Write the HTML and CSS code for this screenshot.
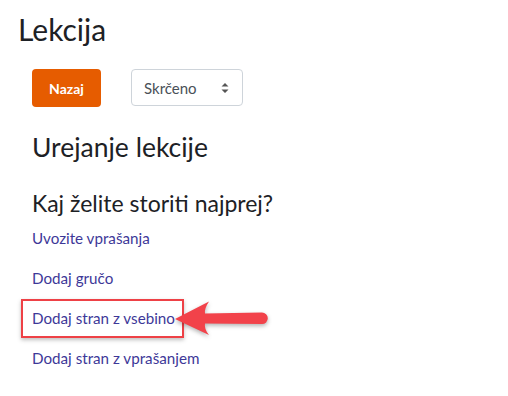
FILE: index.html
```html
<!DOCTYPE html>
<html lang="sl">
<head>
<meta charset="utf-8">
<title>Lekcija</title>
<link rel="stylesheet" href="styles.css">
</head>
<body>
<div class="page">
  <h1 class="title">Lekcija</h1>
  <div class="content">
    <div class="toolbar">
      <button class="btn-back" type="button">Nazaj</button>
      <div class="select">
        <span class="select-label">Skrčeno</span>
        <svg class="select-arrows" width="8" height="10" viewBox="0 0 8 10"><path d="M4 0 L7.5 3.6 H0.5 Z M4 10 L7.5 6.4 H0.5 Z" fill="#555"/></svg>
      </div>
    </div>
    <h2 class="subtitle">Urejanje lekcije</h2>
    <h3 class="question">Kaj želite storiti najprej?</h3>
    <ul class="actions">
      <li><a href="#">Uvozite vprašanja</a></li>
      <li><a href="#">Dodaj gručo</a></li>
      <li class="highlighted">
        <a href="#">Dodaj stran z vsebino</a>
        <span class="mark-box"></span>
        <svg class="mark-arrow" width="110" height="50" viewBox="0 0 110 50">
          <path d="M6 25 L40 7.5 Q35 15 36 19.5 L93 18.5 A5.8 5.8 0 0 1 93 30.1 L36 29.5 Q35 35 40 41 Z" fill="#f2424a"/>
        </svg>
      </li>
      <li><a href="#">Dodaj stran z vprašanjem</a></li>
    </ul>
  </div>
</div>
</body>
</html>
```

FILE: styles.css
```css
html, body {
  margin: 0;
  padding: 0;
  background: #ffffff;
}

body {
  font-family: "Lato", "Liberation Sans", sans-serif;
  color: #1d2125;
}

.page {
  padding: 11px 0 0 18px;
}

.title {
  margin: 0;
  font-size: 30px;
  line-height: 36px;
  font-weight: 400;
}

.content {
  padding-left: 14px;
}

.toolbar {
  display: flex;
  gap: 30px;
  margin-top: 22px;
  height: 38px;
}

.btn-back {
  width: 69px;
  height: 38px;
  border: none;
  border-radius: 4px;
  background: #e65c00;
  color: #ffffff;
  font-family: inherit;
  font-size: 14px;
  font-weight: 700;
  padding: 0;
}

.select {
  box-sizing: border-box;
  width: 112px;
  height: 37px;
  border: 1px solid #ced4da;
  border-radius: 4px;
  display: flex;
  align-items: center;
  justify-content: space-between;
  padding: 0 13px 0 12px;
  color: #495057;
  font-size: 15px;
}

.select-arrows {
  display: block;
}

.subtitle {
  margin: 24px 0 0;
  font-size: 26.5px;
  line-height: 32px;
  font-weight: 400;
}

.question {
  margin: 26px 0 0;
  font-size: 23px;
  line-height: 28px;
  font-weight: 400;
}

.actions {
  list-style: none;
  margin: 1px 0 0;
  padding: 0;
}

.actions li {
  font-size: 15.2px;
  line-height: 40px;
  height: 40px;
}

.actions a {
  color: #3d3898;
  text-decoration: none;
}

.highlighted {
  position: relative;
}

.mark-box {
  position: absolute;
  left: -11px;
  top: 1px;
  width: 163px;
  height: 39px;
  box-sizing: border-box;
  border: 2px solid #ee4146;
  box-shadow: 0 2px 4px rgba(0, 0, 0, 0.25);
  pointer-events: none;
}

.mark-arrow {
  position: absolute;
  left: 137px;
  top: -4px;
  filter: drop-shadow(0 2px 2px rgba(0, 0, 0, 0.3));
  pointer-events: none;
}
```
